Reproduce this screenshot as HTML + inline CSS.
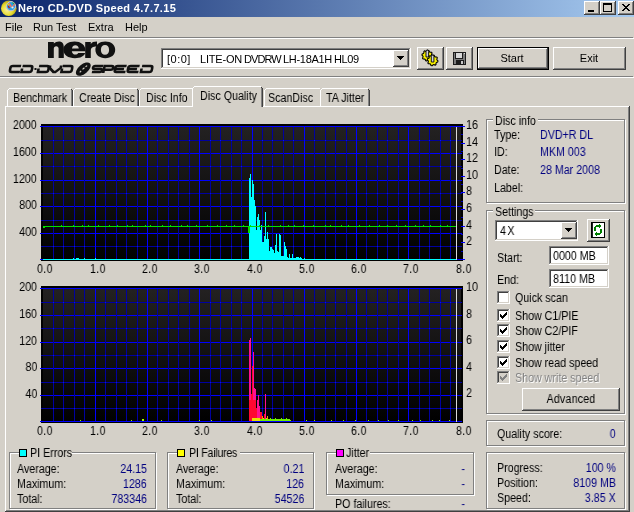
<!DOCTYPE html>
<html><head><meta charset="utf-8"><style>
html,body{margin:0;padding:0}
body{width:634px;height:512px;position:relative;overflow:hidden;background:#D4D0C8;font-family:"Liberation Sans",sans-serif}
.t{position:absolute;will-change:transform;font:11px/13px "Liberation Sans",sans-serif;white-space:pre;color:#000}
.u{position:absolute;will-change:transform;font:12px/13px "Liberation Sans",sans-serif;white-space:pre;color:#000;transform:scaleX(0.89)}
.raised{position:absolute;background:#D4D0C8;box-shadow:inset -1px -1px #404040,inset 1px 1px #fff,inset -2px -2px #808080,inset 2px 2px #D4D0C8}
.sunken{position:absolute;box-shadow:inset -1px -1px #fff,inset 1px 1px #808080,inset -2px -2px #D4D0C8,inset 2px 2px #404040}
</style></head><body>
<div style="position:absolute;left:0px;top:0px;width:634px;height:17px;background:linear-gradient(90deg,#0A246A,#A6CAF0);"></div>
<svg style="position:absolute;left:0;top:0" width="18" height="17">
<defs><radialGradient id="ig" cx="40%" cy="60%" r="65%"><stop offset="0" stop-color="#f8f0a0"/><stop offset="0.55" stop-color="#e8dc30"/><stop offset="1" stop-color="#a09010"/></radialGradient></defs>
<circle cx="8.8" cy="8.3" r="7.8" fill="url(#ig)"/>
<circle cx="11" cy="6.2" r="4.6" fill="#2aa0e8" stroke="#c8c4d8" stroke-width="1"/>
<path d="M9.5,2.6 L12,6.5 L10.8,7.6 L8.6,3.6 Z" fill="#ff7050"/><path d="M12,6.5 L14.5,3.5 L15,5 L12.8,7 Z" fill="#ff7050"/>
<path d="M7.5,5.2 Q8,8.5 10.2,8.2 L9,6 Z" fill="#c01010"/><circle cx="8.2" cy="4.5" r="0.9" fill="#f0d000"/>
<path d="M11.5,2.2 L14.8,3 L13.5,4.2 Z" fill="#20a040"/><circle cx="12.5" cy="7.5" r="1.1" fill="#f0f0f0"/>
</svg>
<div class="t" style="left:18px;top:2px;color:#fff;font-weight:bold;letter-spacing:0.32px">Nero CD-DVD Speed 4.7.7.15</div>
<div class="raised" style="left:584px;top:1px;width:16px;height:14px;"></div>
<div class="raised" style="left:600px;top:1px;width:16px;height:14px;"></div>
<div class="raised" style="left:618px;top:1px;width:16px;height:14px;"></div>
<div style="position:absolute;left:588px;top:10px;width:6px;height:2px;background:#000;"></div>
<div style="position:absolute;left:603px;top:3px;width:7px;height:6px;border:1px solid #000;border-top-width:2px"></div>
<svg style="position:absolute;left:622px;top:4px" width="8" height="7" shape-rendering="crispEdges">
<path d="M0 0h2v1h-2zM6 0h2v1h-2zM1 1h2v1h-2zM5 1h2v1h-2zM2 2h4v1h-4zM3 3h2v1h-2zM2 4h4v1h-4zM1 5h2v1h-2zM5 5h2v1h-2zM0 6h2v1h-2zM6 6h2v1h-2z" fill="#000"/></svg>
<div class="t" style="left:5px;top:21px;">File</div>
<div class="t" style="left:33px;top:21px;">Run Test</div>
<div class="t" style="left:88px;top:21px;">Extra</div>
<div class="t" style="left:125px;top:21px;">Help</div>
<div style="position:absolute;left:0px;top:37px;width:633px;height:1px;background:#808080;"></div>
<div style="position:absolute;left:0px;top:38px;width:634px;height:1px;background:#fff;"></div>
<svg style="position:absolute;left:0;top:39px" width="160" height="38" viewBox="0 39 160 38">
<g fill="#111">
<path d="M48,58 V42 H53.8 V43.6 C55.2,42.2 57,41.5 59,41.5 C62.2,41.5 63.8,43.6 63.8,47.2 V58 H58.6 V48.6 C58.6,47.1 57.7,46.2 56.2,46.2 C54.7,46.2 53.8,47.1 53.8,48.8 V58 Z"/>
<path d="M74.6,41.5 C80.8,41.5 85.6,44.8 85.6,51.2 H71.8 C72.2,53.5 73.6,54.6 75.2,54.6 C76.6,54.6 77.6,54 78.2,53 H85.2 C84,56.3 80.5,58.2 75,58.2 C68.2,58.2 63.4,55.2 63.4,49.8 C63.4,44.6 68.2,41.5 74.6,41.5 Z M72,48.4 H78.8 C78.4,46.4 77.2,45.3 75.4,45.3 C73.6,45.3 72.4,46.4 72,48.4 Z"/>
<path d="M85.2,58 V42 H90.8 V44 C91.8,42.3 93.6,41.5 97,41.5 V46.6 C92.6,46.6 90.8,47.8 90.8,51 V58 Z"/>
<path fill-rule="evenodd" d="M105.3,41.4 C111.2,41.4 115.2,44.6 115.2,49.8 C115.2,55 111.2,58.2 105.3,58.2 C99.4,58.2 95.4,55 95.4,49.8 C95.4,44.6 99.4,41.4 105.3,41.4 Z M105,45.1 C102.5,45.1 100.9,47 100.9,49.9 C100.9,52.8 102.5,54.7 105,54.7 C107.5,54.7 109.1,52.8 109.1,49.9 C109.1,47 107.5,45.1 105,45.1 Z"/>
</g>
<g fill="none" stroke="#111" stroke-width="2.6" transform="translate(0,69) skewX(-11) translate(0,-69)">
<path d="M20.5,66 H12.2 Q10.2,66 10.2,68 V70 Q10.2,72 12.2,72 H20.5"/>
<path d="M22,66 H30 Q32,66 32,68 V70 Q32,72 30,72 H22 V68.5"/>
<path d="M38.5,66 H46.5 Q48.5,66 48.5,68 V70 Q48.5,72 46.5,72 H38.5 V68.5"/>
<path d="M49.5,65.5 V68 L54,72 H56 L60.5,68 V65.5"/>
<path d="M62,66 H70 Q72,66 72,68 V70 Q72,72 70,72 H62 V68.5"/>
<path d="M102.5,66 H94.5 Q92.8,66 92.8,67.6 Q92.8,69 94.5,69 H100.5 Q102.3,69 102.3,70.5 Q102.3,72 100.5,72 H92.5"/>
<path d="M104,73 V66 H111 Q113,66 113,67.8 Q113,69.8 111,69.8 H105"/>
<path d="M126,66 H117 Q115,66 115,68 V70 Q115,72 117,72 H126 M116,69 H124"/>
<path d="M139,66 H130 Q128,66 128,68 V70 Q128,72 130,72 H139 M129,69 H137"/>
<path d="M141.5,66 H150 Q152,66 152,68 V70 Q152,72 150,72 H141.5 V68.5"/>
</g>
<rect x="34.5" y="68" width="2" height="2" fill="#111"/>
<g transform="rotate(-40 83.3 69.1)"><ellipse cx="83.3" cy="69.1" rx="8.8" ry="4.7" fill="#111"/><path d="M78.5,69.3 L80.5,69.1 M82.5,68.9 L85,68.8 M86.5,68.8 L88.5,68.9" stroke="#d8d4cc" stroke-width="1.1" fill="none"/></g>
</svg>
<div class="sunken" style="left:161px;top:48px;width:250px;height:21px;background:#fff"></div>
<div class="raised" style="left:393px;top:50px;width:16px;height:17px;"></div>
<svg style="position:absolute;left:397px;top:56px" width="7" height="4" shape-rendering="crispEdges"><path d="M0 0h7v1h-7zM1 1h5v1h-5zM2 2h3v1h-3zM3 3h1v1h-1z" fill="#000"/></svg>
<div class="t" style="left:167px;top:53px;letter-spacing:0.5px">[0:0]</div>
<div class="t" style="left:200px;top:53px;letter-spacing:-0.2px">LITE-ON</div>
<div class="t" style="left:244px;top:53px;letter-spacing:-0.9px">DVDRW</div>
<div class="t" style="left:283px;top:53px;letter-spacing:-0.3px">LH-18A1H</div>
<div class="t" style="left:334px;top:53px;letter-spacing:-0.4px">HL09</div>
<div class="raised" style="left:417px;top:47px;width:27px;height:23px;"></div>
<div class="raised" style="left:446px;top:47px;width:27px;height:23px;"></div>
<svg style="position:absolute;left:418px;top:48px" width="24" height="20">
<path d="M14.67,8.14 L14.46,9.18 L13.18,9.68 L12.70,10.40 L12.72,11.78 L11.84,12.37 L10.57,11.81 L9.72,11.98 L8.76,12.97 L7.72,12.76 L7.22,11.48 L6.50,11.00 L5.12,11.02 L4.53,10.14 L5.09,8.87 L4.92,8.02 L3.93,7.06 L4.14,6.02 L5.42,5.52 L5.90,4.80 L5.88,3.42 L6.76,2.83 L8.03,3.39 L8.88,3.22 L9.84,2.23 L10.88,2.44 L11.38,3.72 L12.10,4.20 L13.48,4.18 L14.07,5.06 L13.51,6.33 L13.68,7.18 Z" fill="#f8f000" stroke="#000" stroke-width="1.1" stroke-linejoin="round"/>
<path d="M8,9 V3.5 L9.3,1.6 L10.6,3.5 V9 Z" fill="#d0d0e0" stroke="#000" stroke-width="0.9"/>
<path d="M19.97,12.94 L19.76,13.98 L18.48,14.48 L18.00,15.20 L18.02,16.58 L17.14,17.17 L15.87,16.61 L15.02,16.78 L14.06,17.77 L13.02,17.56 L12.52,16.28 L11.80,15.80 L10.42,15.82 L9.83,14.94 L10.39,13.67 L10.22,12.82 L9.23,11.86 L9.44,10.82 L10.72,10.32 L11.20,9.60 L11.18,8.22 L12.06,7.63 L13.33,8.19 L14.18,8.02 L15.14,7.03 L16.18,7.24 L16.68,8.52 L17.40,9.00 L18.78,8.98 L19.37,9.86 L18.81,11.13 L18.98,11.98 Z" fill="#f8f000" stroke="#000" stroke-width="1.1" stroke-linejoin="round"/>
<path d="M13.3,14 V8.5 L14.6,6.6 L15.9,8.5 V14 Z" fill="#d0d0e0" stroke="#000" stroke-width="0.9"/>
</svg>
<svg style="position:absolute;left:453px;top:52px" width="13" height="13" shape-rendering="crispEdges">
<rect x="0" y="0" width="13" height="13" fill="#1c1c1c"/><rect x="1" y="1" width="11" height="11" fill="#7c7c7c"/>
<rect x="2" y="1" width="8" height="6" fill="#1c1c1c"/><rect x="3" y="1" width="6" height="5" fill="#d8d8d8"/>
<rect x="3" y="8" width="8" height="5" fill="#1c1c1c"/><rect x="8" y="9" width="2" height="3" fill="#c8c8c8"/>
<rect x="11" y="1" width="1" height="1" fill="#e0e0e0"/>
</svg>
<div style="position:absolute;left:477px;top:47px;width:72px;height:23px;background:#000;"></div>
<div class="raised" style="left:478px;top:48px;width:70px;height:21px;"></div>
<div class="t" style="left:472.0px;width:80px;top:52px;text-align:center;">Start</div>
<div class="raised" style="left:553px;top:47px;width:73px;height:23px;"></div>
<div class="t" style="left:549.0px;width:80px;top:52px;text-align:center;">Exit</div>
<div style="position:absolute;left:0px;top:76px;width:633px;height:1px;background:#808080;"></div>
<div style="position:absolute;left:0px;top:77px;width:634px;height:1px;background:#fff;"></div>
<div style="position:absolute;left:5px;top:106px;width:625px;height:406px;background:#D4D0C8;"></div>
<div style="position:absolute;left:5px;top:106px;width:624px;height:1px;background:#fff;"></div>
<div style="position:absolute;left:5px;top:106px;width:1px;height:405px;background:#fff;"></div>
<div style="position:absolute;left:628px;top:107px;width:1px;height:404px;background:#808080;"></div>
<div style="position:absolute;left:629px;top:106px;width:1px;height:406px;background:#404040;"></div>
<div style="position:absolute;left:6px;top:510px;width:623px;height:1px;background:#808080;"></div>
<div style="position:absolute;left:5px;top:511px;width:625px;height:1px;background:#404040;"></div>
<div style="position:absolute;left:7px;top:88px;width:66px;height:18px;background:#D4D0C8"></div>
<div style="position:absolute;left:9px;top:88px;width:62px;height:1px;background:#fff;"></div>
<div style="position:absolute;left:8px;top:89px;width:1px;height:1px;background:#fff;"></div>
<div style="position:absolute;left:7px;top:90px;width:1px;height:16px;background:#fff;"></div>
<div style="position:absolute;left:71px;top:89px;width:1px;height:17px;background:#808080;"></div>
<div style="position:absolute;left:72px;top:90px;width:1px;height:16px;background:#404040;"></div>
<div style="position:absolute;left:71px;top:89px;width:1px;height:1px;background:#404040;"></div>
<div class="u" style="left:13px;top:92px;transform-origin:0 0;letter-spacing:0px">Benchmark</div>
<div style="position:absolute;left:73px;top:88px;width:66px;height:18px;background:#D4D0C8"></div>
<div style="position:absolute;left:75px;top:88px;width:62px;height:1px;background:#fff;"></div>
<div style="position:absolute;left:74px;top:89px;width:1px;height:1px;background:#fff;"></div>
<div style="position:absolute;left:73px;top:90px;width:1px;height:16px;background:#fff;"></div>
<div style="position:absolute;left:137px;top:89px;width:1px;height:17px;background:#808080;"></div>
<div style="position:absolute;left:138px;top:90px;width:1px;height:16px;background:#404040;"></div>
<div style="position:absolute;left:137px;top:89px;width:1px;height:1px;background:#404040;"></div>
<div class="u" style="left:79px;top:92px;transform-origin:0 0;letter-spacing:0px">Create Disc</div>
<div style="position:absolute;left:139px;top:88px;width:56px;height:18px;background:#D4D0C8"></div>
<div style="position:absolute;left:141px;top:88px;width:52px;height:1px;background:#fff;"></div>
<div style="position:absolute;left:140px;top:89px;width:1px;height:1px;background:#fff;"></div>
<div style="position:absolute;left:139px;top:90px;width:1px;height:16px;background:#fff;"></div>
<div style="position:absolute;left:193px;top:89px;width:1px;height:17px;background:#808080;"></div>
<div style="position:absolute;left:194px;top:90px;width:1px;height:16px;background:#404040;"></div>
<div style="position:absolute;left:193px;top:89px;width:1px;height:1px;background:#404040;"></div>
<div class="u" style="left:146px;top:92px;transform-origin:0 0;letter-spacing:0px">Disc Info</div>
<div style="position:absolute;left:264px;top:88px;width:58px;height:18px;background:#D4D0C8"></div>
<div style="position:absolute;left:266px;top:88px;width:54px;height:1px;background:#fff;"></div>
<div style="position:absolute;left:265px;top:89px;width:1px;height:1px;background:#fff;"></div>
<div style="position:absolute;left:264px;top:90px;width:1px;height:16px;background:#fff;"></div>
<div style="position:absolute;left:320px;top:89px;width:1px;height:17px;background:#808080;"></div>
<div style="position:absolute;left:321px;top:90px;width:1px;height:16px;background:#404040;"></div>
<div style="position:absolute;left:320px;top:89px;width:1px;height:1px;background:#404040;"></div>
<div class="u" style="left:268px;top:92px;transform-origin:0 0;letter-spacing:0px">ScanDisc</div>
<div style="position:absolute;left:320px;top:88px;width:50px;height:18px;background:#D4D0C8"></div>
<div style="position:absolute;left:322px;top:88px;width:46px;height:1px;background:#fff;"></div>
<div style="position:absolute;left:321px;top:89px;width:1px;height:1px;background:#fff;"></div>
<div style="position:absolute;left:320px;top:90px;width:1px;height:16px;background:#fff;"></div>
<div style="position:absolute;left:368px;top:89px;width:1px;height:17px;background:#808080;"></div>
<div style="position:absolute;left:369px;top:90px;width:1px;height:16px;background:#404040;"></div>
<div style="position:absolute;left:368px;top:89px;width:1px;height:1px;background:#404040;"></div>
<div class="u" style="left:326px;top:92px;transform-origin:0 0;letter-spacing:0px">TA Jitter</div>
<div style="position:absolute;left:192px;top:86px;width:71px;height:21px;background:#D4D0C8"></div>
<div style="position:absolute;left:194px;top:86px;width:67px;height:1px;background:#fff;"></div>
<div style="position:absolute;left:193px;top:87px;width:1px;height:1px;background:#fff;"></div>
<div style="position:absolute;left:192px;top:88px;width:1px;height:19px;background:#fff;"></div>
<div style="position:absolute;left:261px;top:87px;width:1px;height:20px;background:#808080;"></div>
<div style="position:absolute;left:262px;top:88px;width:1px;height:19px;background:#404040;"></div>
<div style="position:absolute;left:261px;top:87px;width:1px;height:1px;background:#404040;"></div>
<div class="u" style="left:200px;top:90px;transform-origin:0 0;letter-spacing:0px">Disc Quality</div>
<svg style="position:absolute;left:0;top:0" width="634" height="512" shape-rendering="crispEdges"><defs><linearGradient id="bg126" x1="0" y1="0" x2="0" y2="1"><stop offset="0" stop-color="#242222"/><stop offset="1" stop-color="#000"/></linearGradient></defs><rect x="41" y="124" width="422" height="137" fill="url(#bg126)"/><rect x="40" y="126" width="421" height="1" fill="#0000FF"/><rect x="43" y="140" width="418" height="1" fill="#0000A0"/><rect x="40" y="153" width="421" height="1" fill="#0000FF"/><rect x="43" y="166" width="418" height="1" fill="#0000A0"/><rect x="40" y="180" width="421" height="1" fill="#0000FF"/><rect x="43" y="193" width="418" height="1" fill="#0000A0"/><rect x="40" y="206" width="421" height="1" fill="#0000FF"/><rect x="43" y="220" width="418" height="1" fill="#0000A0"/><rect x="40" y="233" width="421" height="1" fill="#0000FF"/><rect x="43" y="246" width="418" height="1" fill="#0000A0"/><rect x="40" y="259" width="421" height="1" fill="#0000FF"/><rect x="53" y="126" width="1" height="133" fill="#0000A0"/><rect x="53" y="140" width="1" height="1" fill="#0818E8"/><rect x="53" y="166" width="1" height="1" fill="#0818E8"/><rect x="53" y="193" width="1" height="1" fill="#0818E8"/><rect x="53" y="220" width="1" height="1" fill="#0818E8"/><rect x="53" y="246" width="1" height="1" fill="#0818E8"/><rect x="63" y="126" width="1" height="133" fill="#0000A0"/><rect x="63" y="140" width="1" height="1" fill="#0818E8"/><rect x="63" y="166" width="1" height="1" fill="#0818E8"/><rect x="63" y="193" width="1" height="1" fill="#0818E8"/><rect x="63" y="220" width="1" height="1" fill="#0818E8"/><rect x="63" y="246" width="1" height="1" fill="#0818E8"/><rect x="74" y="126" width="1" height="133" fill="#0000A0"/><rect x="74" y="140" width="1" height="1" fill="#0818E8"/><rect x="74" y="166" width="1" height="1" fill="#0818E8"/><rect x="74" y="193" width="1" height="1" fill="#0818E8"/><rect x="74" y="220" width="1" height="1" fill="#0818E8"/><rect x="74" y="246" width="1" height="1" fill="#0818E8"/><rect x="84" y="126" width="1" height="133" fill="#0000A0"/><rect x="84" y="140" width="1" height="1" fill="#0818E8"/><rect x="84" y="166" width="1" height="1" fill="#0818E8"/><rect x="84" y="193" width="1" height="1" fill="#0818E8"/><rect x="84" y="220" width="1" height="1" fill="#0818E8"/><rect x="84" y="246" width="1" height="1" fill="#0818E8"/><rect x="95" y="126" width="1" height="133" fill="#0000FF"/><rect x="105" y="126" width="1" height="133" fill="#0000A0"/><rect x="105" y="140" width="1" height="1" fill="#0818E8"/><rect x="105" y="166" width="1" height="1" fill="#0818E8"/><rect x="105" y="193" width="1" height="1" fill="#0818E8"/><rect x="105" y="220" width="1" height="1" fill="#0818E8"/><rect x="105" y="246" width="1" height="1" fill="#0818E8"/><rect x="116" y="126" width="1" height="133" fill="#0000A0"/><rect x="116" y="140" width="1" height="1" fill="#0818E8"/><rect x="116" y="166" width="1" height="1" fill="#0818E8"/><rect x="116" y="193" width="1" height="1" fill="#0818E8"/><rect x="116" y="220" width="1" height="1" fill="#0818E8"/><rect x="116" y="246" width="1" height="1" fill="#0818E8"/><rect x="126" y="126" width="1" height="133" fill="#0000A0"/><rect x="126" y="140" width="1" height="1" fill="#0818E8"/><rect x="126" y="166" width="1" height="1" fill="#0818E8"/><rect x="126" y="193" width="1" height="1" fill="#0818E8"/><rect x="126" y="220" width="1" height="1" fill="#0818E8"/><rect x="126" y="246" width="1" height="1" fill="#0818E8"/><rect x="137" y="126" width="1" height="133" fill="#0000A0"/><rect x="137" y="140" width="1" height="1" fill="#0818E8"/><rect x="137" y="166" width="1" height="1" fill="#0818E8"/><rect x="137" y="193" width="1" height="1" fill="#0818E8"/><rect x="137" y="220" width="1" height="1" fill="#0818E8"/><rect x="137" y="246" width="1" height="1" fill="#0818E8"/><rect x="147" y="126" width="1" height="133" fill="#0000FF"/><rect x="157" y="126" width="1" height="133" fill="#0000A0"/><rect x="157" y="140" width="1" height="1" fill="#0818E8"/><rect x="157" y="166" width="1" height="1" fill="#0818E8"/><rect x="157" y="193" width="1" height="1" fill="#0818E8"/><rect x="157" y="220" width="1" height="1" fill="#0818E8"/><rect x="157" y="246" width="1" height="1" fill="#0818E8"/><rect x="168" y="126" width="1" height="133" fill="#0000A0"/><rect x="168" y="140" width="1" height="1" fill="#0818E8"/><rect x="168" y="166" width="1" height="1" fill="#0818E8"/><rect x="168" y="193" width="1" height="1" fill="#0818E8"/><rect x="168" y="220" width="1" height="1" fill="#0818E8"/><rect x="168" y="246" width="1" height="1" fill="#0818E8"/><rect x="178" y="126" width="1" height="133" fill="#0000A0"/><rect x="178" y="140" width="1" height="1" fill="#0818E8"/><rect x="178" y="166" width="1" height="1" fill="#0818E8"/><rect x="178" y="193" width="1" height="1" fill="#0818E8"/><rect x="178" y="220" width="1" height="1" fill="#0818E8"/><rect x="178" y="246" width="1" height="1" fill="#0818E8"/><rect x="189" y="126" width="1" height="133" fill="#0000A0"/><rect x="189" y="140" width="1" height="1" fill="#0818E8"/><rect x="189" y="166" width="1" height="1" fill="#0818E8"/><rect x="189" y="193" width="1" height="1" fill="#0818E8"/><rect x="189" y="220" width="1" height="1" fill="#0818E8"/><rect x="189" y="246" width="1" height="1" fill="#0818E8"/><rect x="199" y="126" width="1" height="133" fill="#0000FF"/><rect x="210" y="126" width="1" height="133" fill="#0000A0"/><rect x="210" y="140" width="1" height="1" fill="#0818E8"/><rect x="210" y="166" width="1" height="1" fill="#0818E8"/><rect x="210" y="193" width="1" height="1" fill="#0818E8"/><rect x="210" y="220" width="1" height="1" fill="#0818E8"/><rect x="210" y="246" width="1" height="1" fill="#0818E8"/><rect x="220" y="126" width="1" height="133" fill="#0000A0"/><rect x="220" y="140" width="1" height="1" fill="#0818E8"/><rect x="220" y="166" width="1" height="1" fill="#0818E8"/><rect x="220" y="193" width="1" height="1" fill="#0818E8"/><rect x="220" y="220" width="1" height="1" fill="#0818E8"/><rect x="220" y="246" width="1" height="1" fill="#0818E8"/><rect x="231" y="126" width="1" height="133" fill="#0000A0"/><rect x="231" y="140" width="1" height="1" fill="#0818E8"/><rect x="231" y="166" width="1" height="1" fill="#0818E8"/><rect x="231" y="193" width="1" height="1" fill="#0818E8"/><rect x="231" y="220" width="1" height="1" fill="#0818E8"/><rect x="231" y="246" width="1" height="1" fill="#0818E8"/><rect x="241" y="126" width="1" height="133" fill="#0000A0"/><rect x="241" y="140" width="1" height="1" fill="#0818E8"/><rect x="241" y="166" width="1" height="1" fill="#0818E8"/><rect x="241" y="193" width="1" height="1" fill="#0818E8"/><rect x="241" y="220" width="1" height="1" fill="#0818E8"/><rect x="241" y="246" width="1" height="1" fill="#0818E8"/><rect x="252" y="126" width="1" height="133" fill="#0000FF"/><rect x="262" y="126" width="1" height="133" fill="#0000A0"/><rect x="262" y="140" width="1" height="1" fill="#0818E8"/><rect x="262" y="166" width="1" height="1" fill="#0818E8"/><rect x="262" y="193" width="1" height="1" fill="#0818E8"/><rect x="262" y="220" width="1" height="1" fill="#0818E8"/><rect x="262" y="246" width="1" height="1" fill="#0818E8"/><rect x="272" y="126" width="1" height="133" fill="#0000A0"/><rect x="272" y="140" width="1" height="1" fill="#0818E8"/><rect x="272" y="166" width="1" height="1" fill="#0818E8"/><rect x="272" y="193" width="1" height="1" fill="#0818E8"/><rect x="272" y="220" width="1" height="1" fill="#0818E8"/><rect x="272" y="246" width="1" height="1" fill="#0818E8"/><rect x="283" y="126" width="1" height="133" fill="#0000A0"/><rect x="283" y="140" width="1" height="1" fill="#0818E8"/><rect x="283" y="166" width="1" height="1" fill="#0818E8"/><rect x="283" y="193" width="1" height="1" fill="#0818E8"/><rect x="283" y="220" width="1" height="1" fill="#0818E8"/><rect x="283" y="246" width="1" height="1" fill="#0818E8"/><rect x="293" y="126" width="1" height="133" fill="#0000A0"/><rect x="293" y="140" width="1" height="1" fill="#0818E8"/><rect x="293" y="166" width="1" height="1" fill="#0818E8"/><rect x="293" y="193" width="1" height="1" fill="#0818E8"/><rect x="293" y="220" width="1" height="1" fill="#0818E8"/><rect x="293" y="246" width="1" height="1" fill="#0818E8"/><rect x="304" y="126" width="1" height="133" fill="#0000FF"/><rect x="314" y="126" width="1" height="133" fill="#0000A0"/><rect x="314" y="140" width="1" height="1" fill="#0818E8"/><rect x="314" y="166" width="1" height="1" fill="#0818E8"/><rect x="314" y="193" width="1" height="1" fill="#0818E8"/><rect x="314" y="220" width="1" height="1" fill="#0818E8"/><rect x="314" y="246" width="1" height="1" fill="#0818E8"/><rect x="325" y="126" width="1" height="133" fill="#0000A0"/><rect x="325" y="140" width="1" height="1" fill="#0818E8"/><rect x="325" y="166" width="1" height="1" fill="#0818E8"/><rect x="325" y="193" width="1" height="1" fill="#0818E8"/><rect x="325" y="220" width="1" height="1" fill="#0818E8"/><rect x="325" y="246" width="1" height="1" fill="#0818E8"/><rect x="335" y="126" width="1" height="133" fill="#0000A0"/><rect x="335" y="140" width="1" height="1" fill="#0818E8"/><rect x="335" y="166" width="1" height="1" fill="#0818E8"/><rect x="335" y="193" width="1" height="1" fill="#0818E8"/><rect x="335" y="220" width="1" height="1" fill="#0818E8"/><rect x="335" y="246" width="1" height="1" fill="#0818E8"/><rect x="346" y="126" width="1" height="133" fill="#0000A0"/><rect x="346" y="140" width="1" height="1" fill="#0818E8"/><rect x="346" y="166" width="1" height="1" fill="#0818E8"/><rect x="346" y="193" width="1" height="1" fill="#0818E8"/><rect x="346" y="220" width="1" height="1" fill="#0818E8"/><rect x="346" y="246" width="1" height="1" fill="#0818E8"/><rect x="356" y="126" width="1" height="133" fill="#0000FF"/><rect x="366" y="126" width="1" height="133" fill="#0000A0"/><rect x="366" y="140" width="1" height="1" fill="#0818E8"/><rect x="366" y="166" width="1" height="1" fill="#0818E8"/><rect x="366" y="193" width="1" height="1" fill="#0818E8"/><rect x="366" y="220" width="1" height="1" fill="#0818E8"/><rect x="366" y="246" width="1" height="1" fill="#0818E8"/><rect x="377" y="126" width="1" height="133" fill="#0000A0"/><rect x="377" y="140" width="1" height="1" fill="#0818E8"/><rect x="377" y="166" width="1" height="1" fill="#0818E8"/><rect x="377" y="193" width="1" height="1" fill="#0818E8"/><rect x="377" y="220" width="1" height="1" fill="#0818E8"/><rect x="377" y="246" width="1" height="1" fill="#0818E8"/><rect x="387" y="126" width="1" height="133" fill="#0000A0"/><rect x="387" y="140" width="1" height="1" fill="#0818E8"/><rect x="387" y="166" width="1" height="1" fill="#0818E8"/><rect x="387" y="193" width="1" height="1" fill="#0818E8"/><rect x="387" y="220" width="1" height="1" fill="#0818E8"/><rect x="387" y="246" width="1" height="1" fill="#0818E8"/><rect x="398" y="126" width="1" height="133" fill="#0000A0"/><rect x="398" y="140" width="1" height="1" fill="#0818E8"/><rect x="398" y="166" width="1" height="1" fill="#0818E8"/><rect x="398" y="193" width="1" height="1" fill="#0818E8"/><rect x="398" y="220" width="1" height="1" fill="#0818E8"/><rect x="398" y="246" width="1" height="1" fill="#0818E8"/><rect x="408" y="126" width="1" height="133" fill="#0000FF"/><rect x="419" y="126" width="1" height="133" fill="#0000A0"/><rect x="419" y="140" width="1" height="1" fill="#0818E8"/><rect x="419" y="166" width="1" height="1" fill="#0818E8"/><rect x="419" y="193" width="1" height="1" fill="#0818E8"/><rect x="419" y="220" width="1" height="1" fill="#0818E8"/><rect x="419" y="246" width="1" height="1" fill="#0818E8"/><rect x="429" y="126" width="1" height="133" fill="#0000A0"/><rect x="429" y="140" width="1" height="1" fill="#0818E8"/><rect x="429" y="166" width="1" height="1" fill="#0818E8"/><rect x="429" y="193" width="1" height="1" fill="#0818E8"/><rect x="429" y="220" width="1" height="1" fill="#0818E8"/><rect x="429" y="246" width="1" height="1" fill="#0818E8"/><rect x="440" y="126" width="1" height="133" fill="#0000A0"/><rect x="440" y="140" width="1" height="1" fill="#0818E8"/><rect x="440" y="166" width="1" height="1" fill="#0818E8"/><rect x="440" y="193" width="1" height="1" fill="#0818E8"/><rect x="440" y="220" width="1" height="1" fill="#0818E8"/><rect x="440" y="246" width="1" height="1" fill="#0818E8"/><rect x="450" y="126" width="1" height="133" fill="#0000A0"/><rect x="450" y="140" width="1" height="1" fill="#0818E8"/><rect x="450" y="166" width="1" height="1" fill="#0818E8"/><rect x="450" y="193" width="1" height="1" fill="#0818E8"/><rect x="450" y="220" width="1" height="1" fill="#0818E8"/><rect x="450" y="246" width="1" height="1" fill="#0818E8"/><rect x="249" y="178" width="1" height="82" fill="#00FFFF"/><rect x="250" y="174" width="1" height="86" fill="#00FFFF"/><rect x="251" y="197" width="1" height="63" fill="#00FFFF"/><rect x="252" y="180" width="1" height="80" fill="#00FFFF"/><rect x="253" y="184" width="1" height="76" fill="#00FFFF"/><rect x="254" y="200" width="1" height="60" fill="#00FFFF"/><rect x="255" y="206" width="1" height="54" fill="#00FFFF"/><rect x="256" y="230" width="1" height="30" fill="#00FFFF"/><rect x="257" y="217" width="1" height="43" fill="#00FFFF"/><rect x="258" y="214" width="1" height="46" fill="#00FFFF"/><rect x="259" y="220" width="1" height="40" fill="#00FFFF"/><rect x="260" y="230" width="1" height="30" fill="#00FFFF"/><rect x="261" y="225" width="1" height="35" fill="#00FFFF"/><rect x="262" y="242" width="1" height="18" fill="#00FFFF"/><rect x="263" y="242" width="1" height="18" fill="#00FFFF"/><rect x="264" y="236" width="1" height="24" fill="#00FFFF"/><rect x="265" y="212" width="1" height="48" fill="#00FFFF"/><rect x="266" y="239" width="1" height="21" fill="#00FFFF"/><rect x="267" y="232" width="1" height="28" fill="#00FFFF"/><rect x="268" y="239" width="1" height="21" fill="#00FFFF"/><rect x="269" y="251" width="1" height="9" fill="#00FFFF"/><rect x="270" y="247" width="1" height="13" fill="#00FFFF"/><rect x="271" y="247" width="1" height="13" fill="#00FFFF"/><rect x="272" y="249" width="1" height="11" fill="#00FFFF"/><rect x="273" y="250" width="1" height="10" fill="#00FFFF"/><rect x="274" y="253" width="1" height="7" fill="#00FFFF"/><rect x="275" y="245" width="1" height="15" fill="#00FFFF"/><rect x="276" y="234" width="1" height="26" fill="#00FFFF"/><rect x="277" y="251" width="1" height="9" fill="#00FFFF"/><rect x="278" y="252" width="1" height="8" fill="#00FFFF"/><rect x="279" y="234" width="1" height="26" fill="#00FFFF"/><rect x="280" y="235" width="1" height="25" fill="#00FFFF"/><rect x="281" y="256" width="1" height="4" fill="#00FFFF"/><rect x="282" y="256" width="1" height="4" fill="#00FFFF"/><rect x="283" y="256" width="1" height="4" fill="#00FFFF"/><rect x="284" y="242" width="1" height="18" fill="#00FFFF"/><rect x="285" y="246" width="1" height="14" fill="#00FFFF"/><rect x="286" y="249" width="1" height="11" fill="#00FFFF"/><rect x="287" y="257" width="1" height="3" fill="#00FFFF"/><rect x="288" y="258" width="1" height="2" fill="#00FFFF"/><rect x="289" y="254" width="1" height="6" fill="#00FFFF"/><rect x="290" y="258" width="1" height="2" fill="#00FFFF"/><rect x="291" y="258" width="1" height="2" fill="#00FFFF"/><rect x="292" y="254" width="1" height="6" fill="#00FFFF"/><rect x="293" y="258" width="1" height="2" fill="#00FFFF"/><rect x="294" y="258" width="1" height="2" fill="#00FFFF"/><rect x="295" y="258" width="1" height="2" fill="#00FFFF"/><rect x="296" y="257" width="1" height="3" fill="#00FFFF"/><rect x="297" y="257" width="1" height="3" fill="#00FFFF"/><rect x="298" y="257" width="1" height="3" fill="#00FFFF"/><rect x="299" y="258" width="1" height="2" fill="#00FFFF"/><rect x="300" y="257" width="1" height="3" fill="#00FFFF"/><rect x="301" y="258" width="1" height="2" fill="#00FFFF"/><rect x="304" y="258" width="1" height="2" fill="#00FFFF"/><rect x="43" y="259" width="414" height="1" fill="#00FFFF"/><rect x="73" y="258" width="1" height="1" fill="#00FFFF"/><rect x="76" y="258" width="1" height="1" fill="#00FFFF"/><rect x="77" y="258" width="1" height="1" fill="#00FFFF"/><rect x="78" y="258" width="1" height="1" fill="#00FFFF"/><rect x="84" y="258" width="1" height="1" fill="#00FFFF"/><rect x="95" y="258" width="1" height="1" fill="#00FFFF"/><rect x="44" y="226" width="413" height="1" fill="#00E000"/><rect x="43" y="226" width="2" height="2" fill="#00E000"/><rect x="248" y="226" width="2" height="7" fill="#00E000"/><rect x="61" y="225" width="1" height="1" fill="#00E000"/><rect x="73" y="225" width="1" height="1" fill="#00E000"/><rect x="82" y="225" width="1" height="1" fill="#00E000"/><rect x="88" y="225" width="1" height="1" fill="#00E000"/><rect x="98" y="225" width="1" height="1" fill="#00E000"/><rect x="109" y="225" width="1" height="1" fill="#00E000"/><rect x="117" y="225" width="1" height="1" fill="#00E000"/><rect x="127" y="225" width="1" height="1" fill="#00E000"/><rect x="132" y="225" width="1" height="1" fill="#00E000"/><rect x="145" y="225" width="1" height="1" fill="#00E000"/><rect x="150" y="225" width="1" height="1" fill="#00E000"/><rect x="162" y="225" width="1" height="1" fill="#00E000"/><rect x="170" y="225" width="1" height="1" fill="#00E000"/><rect x="181" y="225" width="1" height="1" fill="#00E000"/><rect x="187" y="225" width="1" height="1" fill="#00E000"/><rect x="196" y="225" width="1" height="1" fill="#00E000"/><rect x="207" y="225" width="1" height="1" fill="#00E000"/><rect x="217" y="225" width="1" height="1" fill="#00E000"/><rect x="226" y="225" width="1" height="1" fill="#00E000"/><rect x="234" y="225" width="1" height="1" fill="#00E000"/><rect x="243" y="225" width="1" height="1" fill="#00E000"/><rect x="250" y="225" width="1" height="1" fill="#00E000"/><rect x="259" y="225" width="1" height="1" fill="#00E000"/><rect x="268" y="225" width="1" height="1" fill="#00E000"/><rect x="280" y="225" width="1" height="1" fill="#00E000"/><rect x="288" y="225" width="1" height="1" fill="#00E000"/><rect x="294" y="225" width="1" height="1" fill="#00E000"/><rect x="303" y="225" width="1" height="1" fill="#00E000"/><rect x="313" y="225" width="1" height="1" fill="#00E000"/><rect x="325" y="225" width="1" height="1" fill="#00E000"/><rect x="330" y="225" width="1" height="1" fill="#00E000"/><rect x="341" y="225" width="1" height="1" fill="#00E000"/><rect x="348" y="225" width="1" height="1" fill="#00E000"/><rect x="359" y="225" width="1" height="1" fill="#00E000"/><rect x="369" y="225" width="1" height="1" fill="#00E000"/><rect x="379" y="225" width="1" height="1" fill="#00E000"/><rect x="387" y="225" width="1" height="1" fill="#00E000"/><rect x="396" y="225" width="1" height="1" fill="#00E000"/><rect x="405" y="225" width="1" height="1" fill="#00E000"/><rect x="415" y="225" width="1" height="1" fill="#00E000"/><rect x="423" y="225" width="1" height="1" fill="#00E000"/><rect x="430" y="225" width="1" height="1" fill="#00E000"/><rect x="440" y="225" width="1" height="1" fill="#00E000"/><rect x="447" y="225" width="1" height="1" fill="#00E000"/><rect x="456" y="126" width="1" height="134" fill="#D8D8D8"/><rect x="41" y="124" width="422" height="2" fill="#000"/><rect x="41" y="124" width="2" height="137" fill="#000"/><rect x="461" y="124" width="2" height="137" fill="#000"/><rect x="41" y="260" width="422" height="1" fill="#000"/><rect x="40" y="126" width="3" height="1" fill="#0000FF"/><rect x="461" y="126" width="1" height="1" fill="#0000FF"/><rect x="41" y="140" width="2" height="1" fill="#0000A0"/><rect x="461" y="140" width="1" height="1" fill="#0000A0"/><rect x="40" y="153" width="3" height="1" fill="#0000FF"/><rect x="461" y="153" width="1" height="1" fill="#0000FF"/><rect x="41" y="166" width="2" height="1" fill="#0000A0"/><rect x="461" y="166" width="1" height="1" fill="#0000A0"/><rect x="40" y="180" width="3" height="1" fill="#0000FF"/><rect x="461" y="180" width="1" height="1" fill="#0000FF"/><rect x="41" y="193" width="2" height="1" fill="#0000A0"/><rect x="461" y="193" width="1" height="1" fill="#0000A0"/><rect x="40" y="206" width="3" height="1" fill="#0000FF"/><rect x="461" y="206" width="1" height="1" fill="#0000FF"/><rect x="41" y="220" width="2" height="1" fill="#0000A0"/><rect x="461" y="220" width="1" height="1" fill="#0000A0"/><rect x="40" y="233" width="3" height="1" fill="#0000FF"/><rect x="461" y="233" width="1" height="1" fill="#0000FF"/><rect x="41" y="246" width="2" height="1" fill="#0000A0"/><rect x="461" y="246" width="1" height="1" fill="#0000A0"/><rect x="40" y="259" width="3" height="1" fill="#0000FF"/><rect x="461" y="259" width="1" height="1" fill="#0000FF"/><rect x="40" y="126" width="425" height="1" fill="#0000FF"/><rect x="457" y="259" width="8" height="1" fill="#0000FF"/><rect x="461" y="259" width="4" height="1" fill="#0000FF"/><rect x="461" y="251" width="2" height="1" fill="#0000C0"/><rect x="461" y="242" width="4" height="1" fill="#0000FF"/><rect x="461" y="234" width="2" height="1" fill="#0000C0"/><rect x="461" y="226" width="4" height="1" fill="#0000FF"/><rect x="461" y="217" width="2" height="1" fill="#0000C0"/><rect x="461" y="209" width="4" height="1" fill="#0000FF"/><rect x="461" y="201" width="2" height="1" fill="#0000C0"/><rect x="461" y="192" width="4" height="1" fill="#0000FF"/><rect x="461" y="184" width="2" height="1" fill="#0000C0"/><rect x="461" y="176" width="4" height="1" fill="#0000FF"/><rect x="461" y="168" width="2" height="1" fill="#0000C0"/><rect x="461" y="159" width="4" height="1" fill="#0000FF"/><rect x="461" y="151" width="2" height="1" fill="#0000C0"/><rect x="461" y="143" width="4" height="1" fill="#0000FF"/><rect x="461" y="134" width="2" height="1" fill="#0000C0"/><rect x="461" y="126" width="4" height="1" fill="#0000FF"/></svg>
<div class="u" style="right:597px;top:119px;text-align:right;transform-origin:100% 0;">2000</div>
<div class="u" style="right:597px;top:146px;text-align:right;transform-origin:100% 0;">1600</div>
<div class="u" style="right:597px;top:173px;text-align:right;transform-origin:100% 0;">1200</div>
<div class="u" style="right:597px;top:199px;text-align:right;transform-origin:100% 0;">800</div>
<div class="u" style="right:597px;top:226px;text-align:right;transform-origin:100% 0;">400</div>
<div class="u" style="left:466px;top:119px;transform-origin:0 0;">16</div>
<div class="u" style="left:466px;top:136px;transform-origin:0 0;">14</div>
<div class="u" style="left:466px;top:152px;transform-origin:0 0;">12</div>
<div class="u" style="left:466px;top:169px;transform-origin:0 0;">10</div>
<div class="u" style="left:466px;top:185px;transform-origin:0 0;">8</div>
<div class="u" style="left:466px;top:202px;transform-origin:0 0;">6</div>
<div class="u" style="left:466px;top:219px;transform-origin:0 0;">4</div>
<div class="u" style="left:466px;top:235px;transform-origin:0 0;">2</div>
<div class="u" style="left:4.5px;width:80px;top:263px;text-align:center;transform-origin:50% 0;letter-spacing:0.4px">0.0</div>
<div class="u" style="left:57.5px;width:80px;top:263px;text-align:center;transform-origin:50% 0;letter-spacing:0.4px">1.0</div>
<div class="u" style="left:109.5px;width:80px;top:263px;text-align:center;transform-origin:50% 0;letter-spacing:0.4px">2.0</div>
<div class="u" style="left:161.5px;width:80px;top:263px;text-align:center;transform-origin:50% 0;letter-spacing:0.4px">3.0</div>
<div class="u" style="left:214.5px;width:80px;top:263px;text-align:center;transform-origin:50% 0;letter-spacing:0.4px">4.0</div>
<div class="u" style="left:266.5px;width:80px;top:263px;text-align:center;transform-origin:50% 0;letter-spacing:0.4px">5.0</div>
<div class="u" style="left:318.5px;width:80px;top:263px;text-align:center;transform-origin:50% 0;letter-spacing:0.4px">6.0</div>
<div class="u" style="left:370.5px;width:80px;top:263px;text-align:center;transform-origin:50% 0;letter-spacing:0.4px">7.0</div>
<div class="u" style="left:423.5px;width:80px;top:263px;text-align:center;transform-origin:50% 0;letter-spacing:0.4px">8.0</div>
<svg style="position:absolute;left:0;top:0" width="634" height="512" shape-rendering="crispEdges"><defs><linearGradient id="bg288" x1="0" y1="0" x2="0" y2="1"><stop offset="0" stop-color="#242222"/><stop offset="1" stop-color="#000"/></linearGradient></defs><rect x="41" y="286" width="422" height="137" fill="url(#bg288)"/><rect x="40" y="288" width="421" height="1" fill="#0000FF"/><rect x="43" y="302" width="418" height="1" fill="#0000A0"/><rect x="40" y="315" width="421" height="1" fill="#0000FF"/><rect x="43" y="328" width="418" height="1" fill="#0000A0"/><rect x="40" y="342" width="421" height="1" fill="#0000FF"/><rect x="43" y="355" width="418" height="1" fill="#0000A0"/><rect x="40" y="368" width="421" height="1" fill="#0000FF"/><rect x="43" y="382" width="418" height="1" fill="#0000A0"/><rect x="40" y="395" width="421" height="1" fill="#0000FF"/><rect x="43" y="408" width="418" height="1" fill="#0000A0"/><rect x="40" y="421" width="421" height="1" fill="#0000FF"/><rect x="53" y="288" width="1" height="133" fill="#0000A0"/><rect x="53" y="302" width="1" height="1" fill="#0818E8"/><rect x="53" y="328" width="1" height="1" fill="#0818E8"/><rect x="53" y="355" width="1" height="1" fill="#0818E8"/><rect x="53" y="382" width="1" height="1" fill="#0818E8"/><rect x="53" y="408" width="1" height="1" fill="#0818E8"/><rect x="63" y="288" width="1" height="133" fill="#0000A0"/><rect x="63" y="302" width="1" height="1" fill="#0818E8"/><rect x="63" y="328" width="1" height="1" fill="#0818E8"/><rect x="63" y="355" width="1" height="1" fill="#0818E8"/><rect x="63" y="382" width="1" height="1" fill="#0818E8"/><rect x="63" y="408" width="1" height="1" fill="#0818E8"/><rect x="74" y="288" width="1" height="133" fill="#0000A0"/><rect x="74" y="302" width="1" height="1" fill="#0818E8"/><rect x="74" y="328" width="1" height="1" fill="#0818E8"/><rect x="74" y="355" width="1" height="1" fill="#0818E8"/><rect x="74" y="382" width="1" height="1" fill="#0818E8"/><rect x="74" y="408" width="1" height="1" fill="#0818E8"/><rect x="84" y="288" width="1" height="133" fill="#0000A0"/><rect x="84" y="302" width="1" height="1" fill="#0818E8"/><rect x="84" y="328" width="1" height="1" fill="#0818E8"/><rect x="84" y="355" width="1" height="1" fill="#0818E8"/><rect x="84" y="382" width="1" height="1" fill="#0818E8"/><rect x="84" y="408" width="1" height="1" fill="#0818E8"/><rect x="95" y="288" width="1" height="133" fill="#0000FF"/><rect x="105" y="288" width="1" height="133" fill="#0000A0"/><rect x="105" y="302" width="1" height="1" fill="#0818E8"/><rect x="105" y="328" width="1" height="1" fill="#0818E8"/><rect x="105" y="355" width="1" height="1" fill="#0818E8"/><rect x="105" y="382" width="1" height="1" fill="#0818E8"/><rect x="105" y="408" width="1" height="1" fill="#0818E8"/><rect x="116" y="288" width="1" height="133" fill="#0000A0"/><rect x="116" y="302" width="1" height="1" fill="#0818E8"/><rect x="116" y="328" width="1" height="1" fill="#0818E8"/><rect x="116" y="355" width="1" height="1" fill="#0818E8"/><rect x="116" y="382" width="1" height="1" fill="#0818E8"/><rect x="116" y="408" width="1" height="1" fill="#0818E8"/><rect x="126" y="288" width="1" height="133" fill="#0000A0"/><rect x="126" y="302" width="1" height="1" fill="#0818E8"/><rect x="126" y="328" width="1" height="1" fill="#0818E8"/><rect x="126" y="355" width="1" height="1" fill="#0818E8"/><rect x="126" y="382" width="1" height="1" fill="#0818E8"/><rect x="126" y="408" width="1" height="1" fill="#0818E8"/><rect x="137" y="288" width="1" height="133" fill="#0000A0"/><rect x="137" y="302" width="1" height="1" fill="#0818E8"/><rect x="137" y="328" width="1" height="1" fill="#0818E8"/><rect x="137" y="355" width="1" height="1" fill="#0818E8"/><rect x="137" y="382" width="1" height="1" fill="#0818E8"/><rect x="137" y="408" width="1" height="1" fill="#0818E8"/><rect x="147" y="288" width="1" height="133" fill="#0000FF"/><rect x="157" y="288" width="1" height="133" fill="#0000A0"/><rect x="157" y="302" width="1" height="1" fill="#0818E8"/><rect x="157" y="328" width="1" height="1" fill="#0818E8"/><rect x="157" y="355" width="1" height="1" fill="#0818E8"/><rect x="157" y="382" width="1" height="1" fill="#0818E8"/><rect x="157" y="408" width="1" height="1" fill="#0818E8"/><rect x="168" y="288" width="1" height="133" fill="#0000A0"/><rect x="168" y="302" width="1" height="1" fill="#0818E8"/><rect x="168" y="328" width="1" height="1" fill="#0818E8"/><rect x="168" y="355" width="1" height="1" fill="#0818E8"/><rect x="168" y="382" width="1" height="1" fill="#0818E8"/><rect x="168" y="408" width="1" height="1" fill="#0818E8"/><rect x="178" y="288" width="1" height="133" fill="#0000A0"/><rect x="178" y="302" width="1" height="1" fill="#0818E8"/><rect x="178" y="328" width="1" height="1" fill="#0818E8"/><rect x="178" y="355" width="1" height="1" fill="#0818E8"/><rect x="178" y="382" width="1" height="1" fill="#0818E8"/><rect x="178" y="408" width="1" height="1" fill="#0818E8"/><rect x="189" y="288" width="1" height="133" fill="#0000A0"/><rect x="189" y="302" width="1" height="1" fill="#0818E8"/><rect x="189" y="328" width="1" height="1" fill="#0818E8"/><rect x="189" y="355" width="1" height="1" fill="#0818E8"/><rect x="189" y="382" width="1" height="1" fill="#0818E8"/><rect x="189" y="408" width="1" height="1" fill="#0818E8"/><rect x="199" y="288" width="1" height="133" fill="#0000FF"/><rect x="210" y="288" width="1" height="133" fill="#0000A0"/><rect x="210" y="302" width="1" height="1" fill="#0818E8"/><rect x="210" y="328" width="1" height="1" fill="#0818E8"/><rect x="210" y="355" width="1" height="1" fill="#0818E8"/><rect x="210" y="382" width="1" height="1" fill="#0818E8"/><rect x="210" y="408" width="1" height="1" fill="#0818E8"/><rect x="220" y="288" width="1" height="133" fill="#0000A0"/><rect x="220" y="302" width="1" height="1" fill="#0818E8"/><rect x="220" y="328" width="1" height="1" fill="#0818E8"/><rect x="220" y="355" width="1" height="1" fill="#0818E8"/><rect x="220" y="382" width="1" height="1" fill="#0818E8"/><rect x="220" y="408" width="1" height="1" fill="#0818E8"/><rect x="231" y="288" width="1" height="133" fill="#0000A0"/><rect x="231" y="302" width="1" height="1" fill="#0818E8"/><rect x="231" y="328" width="1" height="1" fill="#0818E8"/><rect x="231" y="355" width="1" height="1" fill="#0818E8"/><rect x="231" y="382" width="1" height="1" fill="#0818E8"/><rect x="231" y="408" width="1" height="1" fill="#0818E8"/><rect x="241" y="288" width="1" height="133" fill="#0000A0"/><rect x="241" y="302" width="1" height="1" fill="#0818E8"/><rect x="241" y="328" width="1" height="1" fill="#0818E8"/><rect x="241" y="355" width="1" height="1" fill="#0818E8"/><rect x="241" y="382" width="1" height="1" fill="#0818E8"/><rect x="241" y="408" width="1" height="1" fill="#0818E8"/><rect x="252" y="288" width="1" height="133" fill="#0000FF"/><rect x="262" y="288" width="1" height="133" fill="#0000A0"/><rect x="262" y="302" width="1" height="1" fill="#0818E8"/><rect x="262" y="328" width="1" height="1" fill="#0818E8"/><rect x="262" y="355" width="1" height="1" fill="#0818E8"/><rect x="262" y="382" width="1" height="1" fill="#0818E8"/><rect x="262" y="408" width="1" height="1" fill="#0818E8"/><rect x="272" y="288" width="1" height="133" fill="#0000A0"/><rect x="272" y="302" width="1" height="1" fill="#0818E8"/><rect x="272" y="328" width="1" height="1" fill="#0818E8"/><rect x="272" y="355" width="1" height="1" fill="#0818E8"/><rect x="272" y="382" width="1" height="1" fill="#0818E8"/><rect x="272" y="408" width="1" height="1" fill="#0818E8"/><rect x="283" y="288" width="1" height="133" fill="#0000A0"/><rect x="283" y="302" width="1" height="1" fill="#0818E8"/><rect x="283" y="328" width="1" height="1" fill="#0818E8"/><rect x="283" y="355" width="1" height="1" fill="#0818E8"/><rect x="283" y="382" width="1" height="1" fill="#0818E8"/><rect x="283" y="408" width="1" height="1" fill="#0818E8"/><rect x="293" y="288" width="1" height="133" fill="#0000A0"/><rect x="293" y="302" width="1" height="1" fill="#0818E8"/><rect x="293" y="328" width="1" height="1" fill="#0818E8"/><rect x="293" y="355" width="1" height="1" fill="#0818E8"/><rect x="293" y="382" width="1" height="1" fill="#0818E8"/><rect x="293" y="408" width="1" height="1" fill="#0818E8"/><rect x="304" y="288" width="1" height="133" fill="#0000FF"/><rect x="314" y="288" width="1" height="133" fill="#0000A0"/><rect x="314" y="302" width="1" height="1" fill="#0818E8"/><rect x="314" y="328" width="1" height="1" fill="#0818E8"/><rect x="314" y="355" width="1" height="1" fill="#0818E8"/><rect x="314" y="382" width="1" height="1" fill="#0818E8"/><rect x="314" y="408" width="1" height="1" fill="#0818E8"/><rect x="325" y="288" width="1" height="133" fill="#0000A0"/><rect x="325" y="302" width="1" height="1" fill="#0818E8"/><rect x="325" y="328" width="1" height="1" fill="#0818E8"/><rect x="325" y="355" width="1" height="1" fill="#0818E8"/><rect x="325" y="382" width="1" height="1" fill="#0818E8"/><rect x="325" y="408" width="1" height="1" fill="#0818E8"/><rect x="335" y="288" width="1" height="133" fill="#0000A0"/><rect x="335" y="302" width="1" height="1" fill="#0818E8"/><rect x="335" y="328" width="1" height="1" fill="#0818E8"/><rect x="335" y="355" width="1" height="1" fill="#0818E8"/><rect x="335" y="382" width="1" height="1" fill="#0818E8"/><rect x="335" y="408" width="1" height="1" fill="#0818E8"/><rect x="346" y="288" width="1" height="133" fill="#0000A0"/><rect x="346" y="302" width="1" height="1" fill="#0818E8"/><rect x="346" y="328" width="1" height="1" fill="#0818E8"/><rect x="346" y="355" width="1" height="1" fill="#0818E8"/><rect x="346" y="382" width="1" height="1" fill="#0818E8"/><rect x="346" y="408" width="1" height="1" fill="#0818E8"/><rect x="356" y="288" width="1" height="133" fill="#0000FF"/><rect x="366" y="288" width="1" height="133" fill="#0000A0"/><rect x="366" y="302" width="1" height="1" fill="#0818E8"/><rect x="366" y="328" width="1" height="1" fill="#0818E8"/><rect x="366" y="355" width="1" height="1" fill="#0818E8"/><rect x="366" y="382" width="1" height="1" fill="#0818E8"/><rect x="366" y="408" width="1" height="1" fill="#0818E8"/><rect x="377" y="288" width="1" height="133" fill="#0000A0"/><rect x="377" y="302" width="1" height="1" fill="#0818E8"/><rect x="377" y="328" width="1" height="1" fill="#0818E8"/><rect x="377" y="355" width="1" height="1" fill="#0818E8"/><rect x="377" y="382" width="1" height="1" fill="#0818E8"/><rect x="377" y="408" width="1" height="1" fill="#0818E8"/><rect x="387" y="288" width="1" height="133" fill="#0000A0"/><rect x="387" y="302" width="1" height="1" fill="#0818E8"/><rect x="387" y="328" width="1" height="1" fill="#0818E8"/><rect x="387" y="355" width="1" height="1" fill="#0818E8"/><rect x="387" y="382" width="1" height="1" fill="#0818E8"/><rect x="387" y="408" width="1" height="1" fill="#0818E8"/><rect x="398" y="288" width="1" height="133" fill="#0000A0"/><rect x="398" y="302" width="1" height="1" fill="#0818E8"/><rect x="398" y="328" width="1" height="1" fill="#0818E8"/><rect x="398" y="355" width="1" height="1" fill="#0818E8"/><rect x="398" y="382" width="1" height="1" fill="#0818E8"/><rect x="398" y="408" width="1" height="1" fill="#0818E8"/><rect x="408" y="288" width="1" height="133" fill="#0000FF"/><rect x="419" y="288" width="1" height="133" fill="#0000A0"/><rect x="419" y="302" width="1" height="1" fill="#0818E8"/><rect x="419" y="328" width="1" height="1" fill="#0818E8"/><rect x="419" y="355" width="1" height="1" fill="#0818E8"/><rect x="419" y="382" width="1" height="1" fill="#0818E8"/><rect x="419" y="408" width="1" height="1" fill="#0818E8"/><rect x="429" y="288" width="1" height="133" fill="#0000A0"/><rect x="429" y="302" width="1" height="1" fill="#0818E8"/><rect x="429" y="328" width="1" height="1" fill="#0818E8"/><rect x="429" y="355" width="1" height="1" fill="#0818E8"/><rect x="429" y="382" width="1" height="1" fill="#0818E8"/><rect x="429" y="408" width="1" height="1" fill="#0818E8"/><rect x="440" y="288" width="1" height="133" fill="#0000A0"/><rect x="440" y="302" width="1" height="1" fill="#0818E8"/><rect x="440" y="328" width="1" height="1" fill="#0818E8"/><rect x="440" y="355" width="1" height="1" fill="#0818E8"/><rect x="440" y="382" width="1" height="1" fill="#0818E8"/><rect x="440" y="408" width="1" height="1" fill="#0818E8"/><rect x="450" y="288" width="1" height="133" fill="#0000A0"/><rect x="450" y="302" width="1" height="1" fill="#0818E8"/><rect x="450" y="328" width="1" height="1" fill="#0818E8"/><rect x="450" y="355" width="1" height="1" fill="#0818E8"/><rect x="450" y="382" width="1" height="1" fill="#0818E8"/><rect x="450" y="408" width="1" height="1" fill="#0818E8"/><rect x="249" y="340" width="1" height="81" fill="#FF1090"/><rect x="250" y="338" width="1" height="83" fill="#FF1090"/><rect x="251" y="394" width="1" height="27" fill="#FF0830"/><rect x="252" y="366" width="1" height="55" fill="#FF0830"/><rect x="253" y="352" width="1" height="69" fill="#FF1090"/><rect x="254" y="388" width="1" height="33" fill="#FF1090"/><rect x="255" y="389" width="1" height="32" fill="#FF1090"/><rect x="256" y="408" width="1" height="13" fill="#FF0830"/><rect x="257" y="400" width="1" height="21" fill="#FF1090"/><rect x="258" y="395" width="1" height="26" fill="#FF1090"/><rect x="259" y="406" width="1" height="15" fill="#FF1090"/><rect x="260" y="412" width="1" height="9" fill="#FF0830"/><rect x="261" y="412" width="1" height="9" fill="#FF0830"/><rect x="262" y="416" width="1" height="5" fill="#FF9000"/><rect x="263" y="418" width="1" height="3" fill="#E0F000"/><rect x="264" y="414" width="1" height="7" fill="#FF0830"/><rect x="265" y="394" width="1" height="27" fill="#FF1090"/><rect x="266" y="418" width="1" height="3" fill="#C8F000"/><rect x="267" y="416" width="1" height="5" fill="#FF9000"/><rect x="249" y="400" width="1" height="21" fill="#FF0830"/><rect x="250" y="400" width="1" height="21" fill="#FF0830"/><rect x="253" y="400" width="1" height="21" fill="#FF0830"/><rect x="254" y="400" width="1" height="21" fill="#FF0830"/><rect x="255" y="400" width="1" height="21" fill="#FF0830"/><rect x="252" y="418" width="1" height="3" fill="#E8E000"/><rect x="253" y="418" width="1" height="3" fill="#E8E000"/><rect x="254" y="418" width="1" height="3" fill="#E8E000"/><rect x="255" y="418" width="1" height="3" fill="#E8E000"/><rect x="256" y="418" width="1" height="3" fill="#E8E000"/><rect x="257" y="418" width="1" height="3" fill="#E8E000"/><rect x="258" y="418" width="1" height="3" fill="#E8E000"/><rect x="259" y="418" width="1" height="3" fill="#E8E000"/><rect x="260" y="419" width="1" height="2" fill="#70F000"/><rect x="261" y="419" width="1" height="2" fill="#70F000"/><rect x="262" y="419" width="1" height="2" fill="#70F000"/><rect x="263" y="419" width="1" height="2" fill="#70F000"/><rect x="264" y="419" width="1" height="2" fill="#70F000"/><rect x="265" y="419" width="1" height="2" fill="#70F000"/><rect x="266" y="419" width="1" height="2" fill="#70F000"/><rect x="267" y="419" width="1" height="2" fill="#70F000"/><rect x="268" y="419" width="1" height="2" fill="#70F000"/><rect x="269" y="419" width="1" height="2" fill="#70F000"/><rect x="270" y="419" width="1" height="2" fill="#70F000"/><rect x="271" y="419" width="1" height="2" fill="#70F000"/><rect x="272" y="419" width="1" height="2" fill="#70F000"/><rect x="273" y="419" width="1" height="2" fill="#70F000"/><rect x="274" y="419" width="1" height="2" fill="#70F000"/><rect x="275" y="419" width="1" height="2" fill="#70F000"/><rect x="276" y="419" width="1" height="2" fill="#70F000"/><rect x="277" y="419" width="1" height="2" fill="#70F000"/><rect x="278" y="419" width="1" height="2" fill="#70F000"/><rect x="279" y="419" width="1" height="2" fill="#70F000"/><rect x="280" y="419" width="1" height="2" fill="#70F000"/><rect x="281" y="419" width="1" height="2" fill="#70F000"/><rect x="282" y="419" width="1" height="2" fill="#70F000"/><rect x="283" y="419" width="1" height="2" fill="#70F000"/><rect x="284" y="419" width="1" height="2" fill="#70F000"/><rect x="285" y="419" width="1" height="2" fill="#70F000"/><rect x="286" y="419" width="1" height="2" fill="#70F000"/><rect x="287" y="419" width="1" height="2" fill="#70F000"/><rect x="288" y="419" width="1" height="2" fill="#70F000"/><rect x="289" y="419" width="1" height="2" fill="#70F000"/><rect x="270" y="418" width="1" height="1" fill="#70F000"/><rect x="275" y="418" width="1" height="1" fill="#70F000"/><rect x="281" y="418" width="1" height="1" fill="#70F000"/><rect x="286" y="418" width="1" height="1" fill="#70F000"/><rect x="80" y="420" width="1" height="1" fill="#90F000"/><rect x="131" y="420" width="1" height="1" fill="#90F000"/><rect x="161" y="420" width="1" height="1" fill="#90F000"/><rect x="199" y="420" width="1" height="1" fill="#90F000"/><rect x="211" y="420" width="1" height="1" fill="#90F000"/><rect x="290" y="420" width="1" height="1" fill="#90F000"/><rect x="306" y="420" width="1" height="1" fill="#90F000"/><rect x="314" y="420" width="1" height="1" fill="#90F000"/><rect x="331" y="420" width="1" height="1" fill="#90F000"/><rect x="343" y="420" width="1" height="1" fill="#90F000"/><rect x="355" y="420" width="1" height="1" fill="#90F000"/><rect x="368" y="420" width="1" height="1" fill="#90F000"/><rect x="378" y="420" width="1" height="1" fill="#90F000"/><rect x="388" y="420" width="1" height="1" fill="#90F000"/><rect x="398" y="420" width="1" height="1" fill="#90F000"/><rect x="412" y="420" width="1" height="1" fill="#90F000"/><rect x="420" y="420" width="1" height="1" fill="#90F000"/><rect x="432" y="420" width="1" height="1" fill="#90F000"/><rect x="439" y="420" width="1" height="1" fill="#90F000"/><rect x="449" y="420" width="1" height="1" fill="#90F000"/><rect x="142" y="419" width="2" height="2" fill="#A0FF00"/><rect x="456" y="288" width="1" height="134" fill="#D8D8D8"/><rect x="41" y="286" width="422" height="2" fill="#000"/><rect x="41" y="286" width="2" height="137" fill="#000"/><rect x="461" y="286" width="2" height="137" fill="#000"/><rect x="41" y="422" width="422" height="1" fill="#000"/><rect x="40" y="288" width="3" height="1" fill="#0000FF"/><rect x="461" y="288" width="1" height="1" fill="#0000FF"/><rect x="41" y="302" width="2" height="1" fill="#0000A0"/><rect x="461" y="302" width="1" height="1" fill="#0000A0"/><rect x="40" y="315" width="3" height="1" fill="#0000FF"/><rect x="461" y="315" width="1" height="1" fill="#0000FF"/><rect x="41" y="328" width="2" height="1" fill="#0000A0"/><rect x="461" y="328" width="1" height="1" fill="#0000A0"/><rect x="40" y="342" width="3" height="1" fill="#0000FF"/><rect x="461" y="342" width="1" height="1" fill="#0000FF"/><rect x="41" y="355" width="2" height="1" fill="#0000A0"/><rect x="461" y="355" width="1" height="1" fill="#0000A0"/><rect x="40" y="368" width="3" height="1" fill="#0000FF"/><rect x="461" y="368" width="1" height="1" fill="#0000FF"/><rect x="41" y="382" width="2" height="1" fill="#0000A0"/><rect x="461" y="382" width="1" height="1" fill="#0000A0"/><rect x="40" y="395" width="3" height="1" fill="#0000FF"/><rect x="461" y="395" width="1" height="1" fill="#0000FF"/><rect x="41" y="408" width="2" height="1" fill="#0000A0"/><rect x="461" y="408" width="1" height="1" fill="#0000A0"/><rect x="40" y="421" width="3" height="1" fill="#0000FF"/><rect x="461" y="421" width="1" height="1" fill="#0000FF"/><rect x="40" y="288" width="421" height="1" fill="#0000FF"/></svg>
<div class="u" style="right:597px;top:281px;text-align:right;transform-origin:100% 0;">200</div>
<div class="u" style="right:597px;top:308px;text-align:right;transform-origin:100% 0;">160</div>
<div class="u" style="right:597px;top:335px;text-align:right;transform-origin:100% 0;">120</div>
<div class="u" style="right:597px;top:361px;text-align:right;transform-origin:100% 0;">80</div>
<div class="u" style="right:597px;top:388px;text-align:right;transform-origin:100% 0;">40</div>
<div class="u" style="left:466px;top:281px;transform-origin:0 0;">10</div>
<div class="u" style="left:466px;top:308px;transform-origin:0 0;">8</div>
<div class="u" style="left:466px;top:334px;transform-origin:0 0;">6</div>
<div class="u" style="left:466px;top:361px;transform-origin:0 0;">4</div>
<div class="u" style="left:466px;top:387px;transform-origin:0 0;">2</div>
<div class="u" style="left:4.5px;width:80px;top:425px;text-align:center;transform-origin:50% 0;letter-spacing:0.4px">0.0</div>
<div class="u" style="left:57.5px;width:80px;top:425px;text-align:center;transform-origin:50% 0;letter-spacing:0.4px">1.0</div>
<div class="u" style="left:109.5px;width:80px;top:425px;text-align:center;transform-origin:50% 0;letter-spacing:0.4px">2.0</div>
<div class="u" style="left:161.5px;width:80px;top:425px;text-align:center;transform-origin:50% 0;letter-spacing:0.4px">3.0</div>
<div class="u" style="left:214.5px;width:80px;top:425px;text-align:center;transform-origin:50% 0;letter-spacing:0.4px">4.0</div>
<div class="u" style="left:266.5px;width:80px;top:425px;text-align:center;transform-origin:50% 0;letter-spacing:0.4px">5.0</div>
<div class="u" style="left:318.5px;width:80px;top:425px;text-align:center;transform-origin:50% 0;letter-spacing:0.4px">6.0</div>
<div class="u" style="left:370.5px;width:80px;top:425px;text-align:center;transform-origin:50% 0;letter-spacing:0.4px">7.0</div>
<div class="u" style="left:423.5px;width:80px;top:425px;text-align:center;transform-origin:50% 0;letter-spacing:0.4px">8.0</div>
<div style="position:absolute;left:487px;top:120px;width:137px;height:82px;border:1px solid #fff"></div>
<div style="position:absolute;left:486px;top:119px;width:137px;height:82px;border:1px solid #808080"></div>
<div style="position:absolute;left:493px;top:119px;width:45px;height:2px;background:#D4D0C8;"></div>
<div class="u" style="left:495px;top:115px;transform-origin:0 0;">Disc info</div>
<div class="u" style="left:494px;top:129px;transform-origin:0 0;">Type:</div>
<div class="u" style="left:540px;top:129px;transform-origin:0 0;color:#000080">DVD+R DL</div>
<div class="u" style="left:494px;top:146px;transform-origin:0 0;">ID:</div>
<div class="u" style="left:540px;top:146px;transform-origin:0 0;color:#000080">MKM 003</div>
<div class="u" style="left:494px;top:164px;transform-origin:0 0;">Date:</div>
<div class="u" style="left:540px;top:164px;transform-origin:0 0;color:#000080">28 Mar 2008</div>
<div class="u" style="left:494px;top:182px;transform-origin:0 0;">Label:</div>
<div style="position:absolute;left:487px;top:211px;width:137px;height:202px;border:1px solid #fff"></div>
<div style="position:absolute;left:486px;top:210px;width:137px;height:202px;border:1px solid #808080"></div>
<div style="position:absolute;left:493px;top:210px;width:42px;height:2px;background:#D4D0C8;"></div>
<div class="u" style="left:495px;top:206px;transform-origin:0 0;">Settings</div>
<div class="sunken" style="left:495px;top:220px;width:83px;height:21px;background:#fff"></div>
<div class="raised" style="left:561px;top:222px;width:16px;height:17px;"></div>
<svg style="position:absolute;left:565px;top:228px" width="7" height="4" shape-rendering="crispEdges"><path d="M0 0h7v1h-7zM1 1h5v1h-5zM2 2h3v1h-3zM3 3h1v1h-1z" fill="#000"/></svg>
<div class="u" style="left:500px;top:225px;transform-origin:0 0;letter-spacing:1.5px">4X</div>
<div class="raised" style="left:587px;top:219px;width:23px;height:23px;"></div>
<svg style="position:absolute;left:591px;top:222px" width="14" height="16" shape-rendering="crispEdges">
<rect x="0" y="0" width="14" height="16" fill="#000"/><rect x="1" y="1" width="12" height="14" fill="#fff"/><rect x="1" y="1" width="1" height="14" fill="#202020"/>
<g fill="#008000"><rect x="3" y="5" width="2" height="4"/><rect x="4" y="4" width="2" height="1"/><rect x="5" y="3" width="3" height="2"/><rect x="8" y="2" width="1" height="4"/><rect x="9" y="3" width="1" height="2"/>
<rect x="9" y="7" width="2" height="4"/><rect x="8" y="11" width="2" height="1"/><rect x="6" y="11" width="3" height="2"/><rect x="5" y="10" width="1" height="4"/><rect x="4" y="11" width="1" height="2"/></g>
</svg>
<div class="u" style="left:497px;top:252px;transform-origin:0 0;">Start:</div>
<div class="sunken" style="left:549px;top:246px;width:60px;height:19px;background:#fff"></div>
<div class="u" style="left:553px;top:250px;transform-origin:0 0;">0000 MB</div>
<div class="u" style="left:497px;top:274px;transform-origin:0 0;">End:</div>
<div class="sunken" style="left:549px;top:269px;width:60px;height:19px;background:#fff"></div>
<div class="u" style="left:553px;top:273px;transform-origin:0 0;">8110 MB</div>
<div class="sunken" style="left:497px;top:291px;width:13px;height:13px;background:#fff"></div>
<div class="u" style="left:515px;top:292px;transform-origin:0 0;">Quick scan</div>
<div class="sunken" style="left:497px;top:309px;width:13px;height:13px;background:#fff"></div>
<svg style="position:absolute;left:500px;top:312px" width="7" height="7" shape-rendering="crispEdges"><path d="M6 0h1v3h-1zM5 1h1v3h-1zM4 2h1v3h-1zM3 3h1v3h-1zM2 4h1v3h-1zM1 3h1v3h-1zM0 2h1v3h-1z" fill="#000"/></svg>
<div class="u" style="left:515px;top:310px;transform-origin:0 0;">Show C1/PIE</div>
<div class="sunken" style="left:497px;top:324px;width:13px;height:13px;background:#fff"></div>
<svg style="position:absolute;left:500px;top:327px" width="7" height="7" shape-rendering="crispEdges"><path d="M6 0h1v3h-1zM5 1h1v3h-1zM4 2h1v3h-1zM3 3h1v3h-1zM2 4h1v3h-1zM1 3h1v3h-1zM0 2h1v3h-1z" fill="#000"/></svg>
<div class="u" style="left:515px;top:325px;transform-origin:0 0;">Show C2/PIF</div>
<div class="sunken" style="left:497px;top:340px;width:13px;height:13px;background:#fff"></div>
<svg style="position:absolute;left:500px;top:343px" width="7" height="7" shape-rendering="crispEdges"><path d="M6 0h1v3h-1zM5 1h1v3h-1zM4 2h1v3h-1zM3 3h1v3h-1zM2 4h1v3h-1zM1 3h1v3h-1zM0 2h1v3h-1z" fill="#000"/></svg>
<div class="u" style="left:515px;top:341px;transform-origin:0 0;">Show jitter</div>
<div class="sunken" style="left:497px;top:356px;width:13px;height:13px;background:#fff"></div>
<svg style="position:absolute;left:500px;top:359px" width="7" height="7" shape-rendering="crispEdges"><path d="M6 0h1v3h-1zM5 1h1v3h-1zM4 2h1v3h-1zM3 3h1v3h-1zM2 4h1v3h-1zM1 3h1v3h-1zM0 2h1v3h-1z" fill="#000"/></svg>
<div class="u" style="left:515px;top:357px;transform-origin:0 0;">Show read speed</div>
<div class="sunken" style="left:497px;top:371px;width:13px;height:13px;background:#D4D0C8"></div>
<svg style="position:absolute;left:500px;top:374px" width="7" height="7" shape-rendering="crispEdges"><path d="M6 0h1v3h-1zM5 1h1v3h-1zM4 2h1v3h-1zM3 3h1v3h-1zM2 4h1v3h-1zM1 3h1v3h-1zM0 2h1v3h-1z" fill="#808080"/></svg>
<div class="u" style="left:515px;top:372px;transform-origin:0 0;color:#808080;text-shadow:1px 1px #fff">Show write speed</div>
<div class="raised" style="left:522px;top:388px;width:98px;height:23px;"></div>
<div class="u" style="left:531.0px;width:80px;top:393px;text-align:center;transform-origin:50% 0;letter-spacing:0.2px">Advanced</div>
<div style="position:absolute;left:487px;top:421px;width:137px;height:24px;border:1px solid #fff"></div>
<div style="position:absolute;left:486px;top:420px;width:137px;height:24px;border:1px solid #808080"></div>
<div class="u" style="left:497px;top:428px;transform-origin:0 0;">Quality score:</div>
<div class="u" style="right:18px;top:428px;text-align:right;transform-origin:100% 0;color:#000080">0</div>
<div style="position:absolute;left:487px;top:453px;width:137px;height:55px;border:1px solid #fff"></div>
<div style="position:absolute;left:486px;top:452px;width:137px;height:55px;border:1px solid #808080"></div>
<div class="u" style="left:497px;top:462px;transform-origin:0 0;">Progress:</div>
<div class="u" style="right:18px;top:462px;text-align:right;transform-origin:100% 0;color:#000080">100 %</div>
<div class="u" style="left:497px;top:477px;transform-origin:0 0;">Position:</div>
<div class="u" style="right:18px;top:477px;text-align:right;transform-origin:100% 0;color:#000080">8109 MB</div>
<div class="u" style="left:497px;top:492px;transform-origin:0 0;">Speed:</div>
<div class="u" style="right:18px;top:492px;text-align:right;transform-origin:100% 0;color:#000080">3.85 X</div>
<div style="position:absolute;left:10px;top:453px;width:145px;height:55px;border:1px solid #fff"></div>
<div style="position:absolute;left:9px;top:452px;width:145px;height:55px;border:1px solid #808080"></div>
<div style="position:absolute;left:28px;top:452px;width:4px;height:2px;background:#D4D0C8;"></div>
<div class="u" style="left:30px;top:448px;transform-origin:0 0;"></div>
<div style="position:absolute;left:19px;top:450px;width:53px;height:4px;background:#D4D0C8;"></div>
<div style="position:absolute;left:19px;top:449px;width:6px;height:6px;border:1px solid #000;background:#00FFFF"></div>
<div class="u" style="left:30px;top:447px;transform-origin:0 0;">PI Errors</div>
<div class="u" style="left:17px;top:463px;transform-origin:0 0;">Average:</div>
<div class="u" style="right:487px;top:463px;text-align:right;transform-origin:100% 0;color:#000080">24.15</div>
<div class="u" style="left:17px;top:478px;transform-origin:0 0;">Maximum:</div>
<div class="u" style="right:487px;top:478px;text-align:right;transform-origin:100% 0;color:#000080">1286</div>
<div class="u" style="left:17px;top:493px;transform-origin:0 0;">Total:</div>
<div class="u" style="right:487px;top:493px;text-align:right;transform-origin:100% 0;color:#000080">783346</div>
<div style="position:absolute;left:168px;top:453px;width:145px;height:55px;border:1px solid #fff"></div>
<div style="position:absolute;left:167px;top:452px;width:145px;height:55px;border:1px solid #808080"></div>
<div style="position:absolute;left:-2px;top:452px;width:4px;height:2px;background:#D4D0C8;"></div>
<div class="u" style="left:0px;top:448px;transform-origin:0 0;"></div>
<div style="position:absolute;left:177px;top:450px;width:63px;height:4px;background:#D4D0C8;"></div>
<div style="position:absolute;left:177px;top:449px;width:6px;height:6px;border:1px solid #000;background:#FFFF00"></div>
<div class="u" style="left:189px;top:447px;transform-origin:0 0;letter-spacing:-0.3px">PI Failures</div>
<div class="u" style="left:176px;top:463px;transform-origin:0 0;">Average:</div>
<div class="u" style="right:330px;top:463px;text-align:right;transform-origin:100% 0;color:#000080">0.21</div>
<div class="u" style="left:176px;top:478px;transform-origin:0 0;">Maximum:</div>
<div class="u" style="right:330px;top:478px;text-align:right;transform-origin:100% 0;color:#000080">126</div>
<div class="u" style="left:176px;top:493px;transform-origin:0 0;">Total:</div>
<div class="u" style="right:330px;top:493px;text-align:right;transform-origin:100% 0;color:#000080">54526</div>
<div style="position:absolute;left:327px;top:453px;width:146px;height:41px;border:1px solid #fff"></div>
<div style="position:absolute;left:326px;top:452px;width:146px;height:41px;border:1px solid #808080"></div>
<div style="position:absolute;left:-2px;top:452px;width:4px;height:2px;background:#D4D0C8;"></div>
<div class="u" style="left:0px;top:448px;transform-origin:0 0;"></div>
<div style="position:absolute;left:336px;top:450px;width:34px;height:4px;background:#D4D0C8;"></div>
<div style="position:absolute;left:336px;top:449px;width:6px;height:6px;border:1px solid #000;background:#FF00FF"></div>
<div class="u" style="left:346px;top:447px;transform-origin:0 0;">Jitter</div>
<div class="u" style="left:335px;top:463px;transform-origin:0 0;">Average:</div>
<div class="u" style="right:169px;top:463px;text-align:right;transform-origin:100% 0;color:#000080">-</div>
<div class="u" style="left:335px;top:478px;transform-origin:0 0;">Maximum:</div>
<div class="u" style="right:169px;top:478px;text-align:right;transform-origin:100% 0;color:#000080">-</div>
<div class="u" style="left:335px;top:498px;transform-origin:0 0;">PO failures:</div>
<div class="u" style="right:169px;top:498px;text-align:right;transform-origin:100% 0;color:#000080">-</div>
</body></html>
